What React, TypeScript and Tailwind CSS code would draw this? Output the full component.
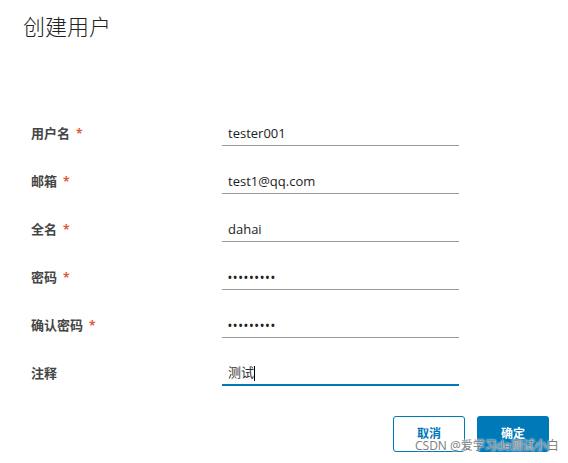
import React from 'react';

const font = "font-['Open_Sans','Noto_Sans_CJK_SC',sans-serif]";

const fields = [
  { label: '用户名', value: 'tester001', required: true, type: 'text' },
  { label: '邮箱', value: 'test1@qq.com', required: true, type: 'text' },
  { label: '全名', value: 'dahai', required: true, type: 'text' },
  { label: '密码', value: '•••••••••', required: true, type: 'password' },
  { label: '确认密码', value: '•••••••••', required: true, type: 'password' },
];

export default function App() {
  return (
    <div className={`relative w-[568px] h-[463px] bg-white overflow-hidden ${font}`}>
      <h3 className="pl-[23px] pt-[12px] text-[22px] leading-[28px] font-light text-[#222]">
        创建用户
      </h3>

      <div className="mt-[70px] pl-[31px]">
        {fields.map((f) => (
          <div key={f.label} className="flex items-center h-12">
            <div className="w-[191px] flex items-center text-[13px] font-bold text-[#454545]">
              {f.label}
              {f.required && <span className="ml-[6px] text-[#e05a3c] text-[12px]">*</span>}
            </div>
            <div className="w-[237px] h-6 border-b border-[#9a9a9a] flex items-center pl-[6px] text-[13px] text-[#222]">
              {f.type === 'password' ? (
                <span className="tracking-[1.6px] text-[10px] font-bold">{f.value}</span>
              ) : (
                f.value
              )}
            </div>
          </div>
        ))}
        <div className="flex items-center h-12">
          <div className="w-[191px] text-[13px] font-bold text-[#454545]">注释</div>
          <div className="w-[237px] h-6 border-b-2 border-[#0079b8] flex items-center pl-[6px] text-[13px] text-[#333]">
            测试
            <span className="inline-block w-px h-[15px] bg-black" />
          </div>
        </div>
      </div>

      <div className="flex justify-end gap-3 pr-[19px] mt-[18px]">
        <button className="w-[72px] h-9 rounded-[3px] border border-[#0079b8] text-[#0079b8] text-[12px] font-bold bg-white">
          取消
        </button>
        <button className="w-[72px] h-9 rounded-[3px] bg-[#0079b8] text-white text-[12px] font-bold">
          确定
        </button>
      </div>

      <div className="absolute left-[415px] top-[438px] text-[12px] leading-[16px] text-[#7d7d7d] [text-shadow:0_0_2px_#fff,0_0_2px_#fff]">
        CSDN @爱学习de测试小白
      </div>
    </div>
  );
}
